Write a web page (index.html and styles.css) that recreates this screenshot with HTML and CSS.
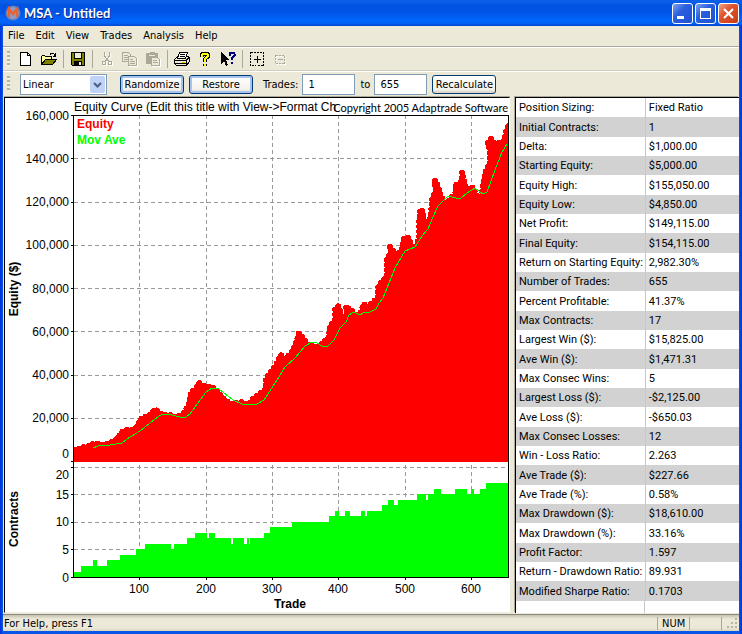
FILE: index.html
```html
<!DOCTYPE html>
<html lang="en">
<head>
    <meta charset="UTF-8">
    <meta name="viewport" content="width=device-width, initial-scale=1.0">
    <title>MSA - Untitled</title>
    <link rel="stylesheet" href="styles.css">
</head>
<body>
    <div class="window">
        <header class="titlebar">
            <svg class="app-icon" width="16" height="16" viewBox="0 0 16 16">
                <circle cx="8" cy="8" r="7.5" fill="#6a7fb8"/>
                <circle cx="8" cy="8" r="6" fill="#8f9cc4"/>
                <path d="M4 12V4l4 5 4-5v8" fill="none" stroke="#f0602c" stroke-width="2.4"/>
            </svg>
            <h1>MSA - Untitled</h1>
            <div class="window-buttons">
                <button type="button" aria-label="Minimize">
                    <svg width="19" height="19" viewBox="0 0 19 19"><path d="M4 12h7v3H4z" fill="#fff"/></svg>
                </button>
                <button type="button" aria-label="Maximize">
                    <svg width="19" height="19" viewBox="0 0 19 19"><path d="M4 4h11v11H4zM5 7v7h9V7z" fill="#fff" fill-rule="evenodd"/></svg>
                </button>
                <button type="button" class="close" aria-label="Close">
                    <svg width="19" height="19" viewBox="0 0 19 19"><path d="M5 5l9 9M14 5l-9 9" stroke="#fff" stroke-width="2.2"/></svg>
                </button>
            </div>
        </header>

        <nav class="menubar">
            <button type="button">File</button>
            <button type="button">Edit</button>
            <button type="button">View</button>
            <button type="button">Trades</button>
            <button type="button">Analysis</button>
            <button type="button">Help</button>
        </nav>

        <div class="toolbar">
            <span class="grip"></span>
            <button type="button" class="tool" aria-label="New">
                <svg width="16" height="16" viewBox="0 0 16 16"><path d="M2.500 1.500h7l3 3v10h-10z" fill="#fff" stroke="#000"/><path d="M9.500 1.500v3h3" fill="none" stroke="#000"/></svg>
            </button>
            <button type="button" class="tool" aria-label="Open">
                <svg width="16" height="16" viewBox="0 0 16 16"><path d="M0.500 13.500v-8l1-1h2l1 1h6v3" fill="#ffff9c" stroke="#000"/><path d="M0.500 13.500l4-5h11l-4 5z" fill="#808000" stroke="#000"/><path d="M9 3.500q2.500-3 5 1M14.500 2v3h-3" fill="none" stroke="#000"/></svg>
            </button>
            <span class="divider"></span>
            <button type="button" class="tool" aria-label="Save">
                <svg width="16" height="16" viewBox="0 0 16 16"><path d="M1.500 1.500h13v13h-12l-1-1z" fill="#808000" stroke="#000"/><path d="M4.500 1.500h7v6h-7z" fill="#ece9d8" stroke="#000"/><path d="M4 10h8v4H4z" fill="#000"/><path d="M9 11h2v3H9z" fill="#ece9d8"/></svg>
            </button>
            <span class="divider"></span>
            <button type="button" class="tool" aria-label="Cut" disabled>
                <svg width="16" height="16" viewBox="0 0 16 16"><g fill="none" stroke="#fff" transform="translate(1 1)"><path d="M5.500 1v4l4 5M10.500 1v4l-4 5"/><circle cx="5" cy="12" r="2"/><circle cx="11" cy="12" r="2"/></g><g fill="none" stroke="#aca899"><path d="M5.500 1v4l4 5M10.500 1v4l-4 5"/><circle cx="5" cy="12" r="2"/><circle cx="11" cy="12" r="2"/></g></svg>
            </button>
            <button type="button" class="tool" aria-label="Copy" disabled>
                <svg width="16" height="16" viewBox="0 0 16 16"><g fill="#ece9d8" stroke="#aca899"><path d="M0.500 1.500h6l2 2v7h-8zM2 4.500h4M2 6.500h5M2 8.500h5"/><path d="M6.500 5.500h6l2 2v7h-8z"/><path d="M8 8.500h3M8 10.500h5M8 12.500h5"/></g><path d="M7 15.500h8.500V8" fill="none" stroke="#fff"/></svg>
            </button>
            <button type="button" class="tool" aria-label="Paste" disabled>
                <svg width="16" height="16" viewBox="0 0 16 16"><path d="M1 2h3l1-1h4l1 1h3v11H1z" fill="#aca899"/><path d="M4 4.500h6" stroke="#ece9d8"/><path d="M6.500 6.500h6l2 2v6h-8z" fill="#ece9d8" stroke="#aca899"/><path d="M8 9.500h4M8 11.500h5" stroke="#aca899"/><path d="M7 15.500h8.500V8" fill="none" stroke="#fff"/></svg>
            </button>
            <span class="divider"></span>
            <button type="button" class="tool" aria-label="Print">
                <svg width="16" height="16" viewBox="0 0 16 16"><path d="M0.500 8.500l3-3h11l1 1v4l-3 4h-10l-2-2z" fill="#ece9d8" stroke="#000"/><path d="M3.500 7.500l2-6h8l-2 6z" fill="#fff" stroke="#000"/><path d="M6 3.500h5M5.500 5.500h5M1 9.500h11l3-3M1 12.500h11M12.500 9.500v4" fill="none" stroke="#000"/><path d="M8 11h3" stroke="#cc0" stroke-width="1"/></svg>
            </button>
            <button type="button" class="tool" aria-label="About">
                <svg width="16" height="16" viewBox="0 0 16 16"><path d="M5 6V4q0-1.500 3-1.500t3 1.500v1.500L8 8v2.500M8 12.500v2" fill="none" stroke="#000" stroke-width="4"/><path d="M5 6V4q0-1.500 3-1.500t3 1.500v1.500L8 8v2.500M8 12.500v2" fill="none" stroke="#ff0" stroke-width="2"/></svg>
            </button>
            <button type="button" class="tool" aria-label="Context help">
                <svg width="16" height="16" viewBox="0 0 16 16"><path d="M1 1v12l3-3 2 5 2-1-2-5h4z" fill="#000"/><path d="M9.500 5V3q0-1.500 2.500-1.500T14.500 3v1.500L12 7v2M12 10.500v2" fill="none" stroke="#000080" stroke-width="2"/></svg>
            </button>
            <span class="divider"></span>
            <button type="button" class="tool" aria-label="Add to selection">
                <svg width="16" height="16" viewBox="0 0 16 16"><path d="M1.500 1.500h13v13h-13z" fill="none" stroke="#000" stroke-dasharray="2 1"/><path d="M5 8.500h7M8.500 5v7" stroke="#000"/></svg>
            </button>
            <button type="button" class="tool" aria-label="Remove from selection" disabled>
                <svg width="16" height="16" viewBox="0 0 16 16"><path d="M4.500 5.500h9v8h-9z" fill="none" stroke="#fff" stroke-dasharray="2 1"/><path d="M3.500 4.500h9v8h-9z" fill="none" stroke="#aca899" stroke-dasharray="2 1"/><path d="M6 8.500h5" stroke="#aca899"/></svg>
            </button>
        </div>

        <form class="toolbar options">
            <span class="grip"></span>
            <div class="combo">
                <select aria-label="Scale">
                    <option>Linear</option>
                    <option>Log</option>
                </select>
                <svg class="combo-arrow" width="15" height="17" viewBox="0 0 15 17"><rect width="15" height="17" rx="2" fill="#c1d2f7"/><path d="M4 7l3.500 3.500L11 7" fill="none" stroke="#4d6185" stroke-width="2.2"/></svg>
            </div>
            <button type="button" class="push default">Randomize</button>
            <button type="button" class="push default">Restore</button>
            <label class="trades" for="from">Trades:</label>
            <input type="text" id="from" value="1">
            <label for="to">to</label>
            <input type="text" id="to" value="655">
            <button type="button" class="push">Recalculate</button>
        </form>

        <main class="panes">
            <section class="chart-pane">
                <svg class="chart" viewBox="5 98 504 514" preserveAspectRatio="xMinYMin meet">
                    <clipPath id="plot"><path d="M74 116H508V462H74z"/></clipPath>

                    <text class="title" x="74" y="111">Equity Curve (Edit this title with View-&gt;Format Ch</text>
                    <text class="copyright" x="508" y="112">Copyright 2005 Adaptrade Software</text>

                    <g class="grid">
                        <path d="M139.500 115V577M206.500 115V577M272.500 115V577M338.500 115V577M405.500 115V577M471.500 115V577"/>
                        <path d="M74 158.500H508M74 202.500H508M74 245.500H508M74 288.500H508M74 331.500H508M74 375.500H508M74 418.500H508M74 467.500H508M74 494.500H508M74 522.500H508M74 549.500H508"/>
                    </g>

                    <!-- equity -->
                    <g clip-path="url(#plot)">
                        <path class="equity" d="M70 466V450L80 449 84 447 90 446 95 443 103 445 112 442 118 438 122 432 127 430 132 430 138 426 139 422 142 418 150 415 155 409 160 413 163 415 170 415 177 417 184 413 188 406 190 399 191 392 194 390 197 387 199 383 204 386 212 387 217 391 223 398 230 404 237 403 242 402 248 405 253 399 257 396 265 390 266 380 269 374 274 368 278 361 281 355 284 359 291 354 295 345 297 340 299 333 303 338 308 345 318 347 324 342 329 337 330 326 335 320 335 310 338 306 340 310 341 316 344 321 347 314 346 306 350 310 354 312 358 318 362 309 364 304 367 308 373 302 378 298 378 288 380 284 387 276 387 265 387 258 391 254 390 247 393 251 396 256 402 249 404 238 408 238 411 243 415 251 419 238 419 226 420 212 421 209 423 213 424 222 427 232 431 214 432 200 436 190 434 181 436 181 438 187 441 196 445 203 449 201 452 197 456 192 456 184 457 188 462 180 462 172 462 172 463 178 466 188 470 190 473 187 475 192 480 203 484 180 486 170 490 163 490 151 488 143 491 139 494 143 499 143 504 141 506 132 509 124V466z"/>
                    </g>
                    <polyline class="average" points="93,448 98,446 110,445 122,443 127,439 140,431 150,423 159,416 163,414 172,415 180,417 186,417 190,414 195,407 206,392 212,388 219,389 233,400 242,404 251,405 257,404 264,400 277,380 285,367 295,358 305,346 312,342 317,343 322,346 328,346 334,340 340,328 346,322 349,315 354,312 360,315 365,312 370,312 376,309 379,303 383,298 395,268 405,251 415,247 422,236 428,229 433,217 438,206 448,196 460,199 467,193 475,188 483,194 487,192 495,170 502,152 507,144"/>

                    <!-- contracts -->
                    <path class="contracts" d="M74 577V572H81V566H93V560H97V566H107V560H120V555H136V549H145V544H171V549H174V544H187V538H195V533H207V538H209V533H215V538H231V544H233V538H244V544H247V538H249V544H250V538H264V533H270V527H292V522H329V516H335V511H339V516H345V511H350V516H361V511H365V516H367V511H382V505H388V500H394V505H398V500H417V494H426V500H428V494H434V489H441V494H455V489H467V494H471V489H474V494H480V489H486V483H508V577z"/>

                    <path class="axis" d="M73.500 578V115.500H508.500V577.500H71M71 115.500h3M71 158.500h3M71 202.500h3M71 245.500h3M71 288.500h3M71 331.500h3M71 375.500h3M71 418.500h3M71 461.500h3M71 467.500h3M71 494.500h3M71 522.500h3M71 549.500h3M139.500 577v3M206.500 577v3M272.500 577v3M338.500 577v3M405.500 577v3M471.500 577v3"/>

                    <g class="y-labels">
                        <text x="69" y="120">160,000</text>
                        <text x="69" y="163">140,000</text>
                        <text x="69" y="206">120,000</text>
                        <text x="69" y="249">100,000</text>
                        <text x="69" y="293">80,000</text>
                        <text x="69" y="336">60,000</text>
                        <text x="69" y="379">40,000</text>
                        <text x="69" y="422">20,000</text>
                        <text x="69" y="458">0</text>
                        <text x="69" y="479">20</text>
                        <text x="69" y="499">15</text>
                        <text x="69" y="526">10</text>
                        <text x="69" y="554">5</text>
                        <text x="69" y="582">0</text>
                    </g>
                    <g class="x-labels">
                        <text x="139" y="593">100</text>
                        <text x="206" y="593">200</text>
                        <text x="272" y="593">300</text>
                        <text x="338" y="593">400</text>
                        <text x="405" y="593">500</text>
                        <text x="471" y="593">600</text>
                    </g>
                    <g class="names">
                        <text x="290" y="608">Trade</text>
                        <text transform="translate(18 289) rotate(-90)">Equity ($)</text>
                        <text transform="translate(18 519) rotate(-90)">Contracts</text>
                    </g>
                    <text class="legend legend-equity" x="77" y="128">Equity</text>
                    <text class="legend legend-average" x="77" y="144">Mov Ave</text>
                </svg>
            </section>

            <section class="stats-pane">
                <table class="stats">
                    <tbody>
                        <tr><th scope="row">Position Sizing:</th><td>Fixed Ratio</td></tr>
                        <tr><th scope="row">Initial Contracts:</th><td>1</td></tr>
                        <tr><th scope="row">Delta:</th><td>$1,000.00</td></tr>
                        <tr><th scope="row">Starting Equity:</th><td>$5,000.00</td></tr>
                        <tr><th scope="row">Equity High:</th><td>$155,050.00</td></tr>
                        <tr><th scope="row">Equity Low:</th><td>$4,850.00</td></tr>
                        <tr><th scope="row">Net Profit:</th><td>$149,115.00</td></tr>
                        <tr><th scope="row">Final Equity:</th><td>$154,115.00</td></tr>
                        <tr><th scope="row">Return on Starting Equity:</th><td>2,982.30%</td></tr>
                        <tr><th scope="row">Number of Trades:</th><td>655</td></tr>
                        <tr><th scope="row">Percent Profitable:</th><td>41.37%</td></tr>
                        <tr><th scope="row">Max Contracts:</th><td>17</td></tr>
                        <tr><th scope="row">Largest Win ($):</th><td>$15,825.00</td></tr>
                        <tr><th scope="row">Ave Win ($):</th><td>$1,471.31</td></tr>
                        <tr><th scope="row">Max Consec Wins:</th><td>5</td></tr>
                        <tr><th scope="row">Largest Loss ($):</th><td>-$2,125.00</td></tr>
                        <tr><th scope="row">Ave Loss ($):</th><td>-$650.03</td></tr>
                        <tr><th scope="row">Max Consec Losses:</th><td>12</td></tr>
                        <tr><th scope="row">Win - Loss Ratio:</th><td>2.263</td></tr>
                        <tr><th scope="row">Ave Trade ($):</th><td>$227.66</td></tr>
                        <tr><th scope="row">Ave Trade (%):</th><td>0.58%</td></tr>
                        <tr><th scope="row">Max Drawdown ($):</th><td>$18,610.00</td></tr>
                        <tr><th scope="row">Max Drawdown (%):</th><td>33.16%</td></tr>
                        <tr><th scope="row">Profit Factor:</th><td>1.597</td></tr>
                        <tr><th scope="row">Return - Drawdown Ratio:</th><td>89.931</td></tr>
                        <tr><th scope="row">Modified Sharpe Ratio:</th><td>0.1703</td></tr>
                    </tbody>
                </table>
                <div class="stats-rest"></div>
            </section>
        </main>

        <footer class="statusbar">
            <span class="hint">For Help, press F1</span>
            <span class="cell">NUM</span>
            <span class="cell"></span>
            <span class="cell corner">
                <svg width="12" height="12" viewBox="0 0 12 12"><path d="M9 1h2v2H9zM5 5h2v2H5zM9 5h2v2H9zM1 9h2v2H1zM5 9h2v2H5zM9 9h2v2H9z" fill="#b8b4a3"/></svg>
            </span>
        </footer>
    </div>
</body>
</html>
```
FILE: styles.css
```css
* {
    box-sizing: border-box;
}
body {
    margin: 0;
    font-family: "DejaVu Sans Condensed", "Liberation Sans", sans-serif;
    font-size: 11px;
    color: #000;
}
button, input, select {
    font: inherit;
    color: inherit;
}
.window {
    display: flex;
    flex-direction: column;
    min-height: 100vh;
    padding: 0 3px 3px;
    background: linear-gradient(90deg, #0031d8, #0855e8 3px, #0855e8 calc(100% - 3px), #0031d8);
}

/* title bar */
.titlebar {
    display: flex;
    align-items: center;
    height: 26px;
    margin: 0 -3px;
    padding: 0 3px 0 5px;
    background: linear-gradient(#0a5ee8 0, #0a5ee8 2px, #0053e1 5px, #0054e5 12px, #0164fb 20px, #0163f8 23px, #0043cf 26px);
}
.titlebar h1 {
    flex: 1;
    margin: 0 0 0 3px;
    font-family: Lato, "Open Sans", sans-serif;
    font-size: 13px;
    line-height: 16px;
    color: #fff;
    text-shadow: 1px 1px #0a1883;
}
.window-buttons {
    display: flex;
    gap: 2px;
}
.window-buttons button {
    width: 21px;
    height: 21px;
    padding: 0;
    border: 1px solid #fff;
    border-radius: 3px;
    background: linear-gradient(135deg, #7ea1f0, #2a5fde 40%, #1f4fd0);
}
.window-buttons .close {
    background: linear-gradient(135deg, #f0a184, #e0532d 40%, #c93c14);
}
.window-buttons svg {
    display: block;
}

/* menu */
.menubar {
    display: flex;
    height: 21px;
    background: #ece9d8;
    border-bottom: 1px solid #aca899;
}
.menubar button {
    padding: 0 6px 2px 5px;
    border: 0;
    background: none;
}

/* toolbars */
.toolbar {
    display: flex;
    align-items: center;
    height: 24px;
    padding-left: 4px;
    padding-bottom: 1px;
    background: #ece9d8;
    border-top: 1px solid #fff;
    border-bottom: 1px solid #d0ccba;
}
.grip {
    width: 3px;
    height: 16px;
    margin-right: 5px;
    background: repeating-linear-gradient(#b8b4a3 0, #b8b4a3 2px, #f8f7f0 2px, #ece9d8 4px);
}
.tool {
    width: 23px;
    height: 21px;
    padding: 0 3px;
    border: 0;
    background: none;
}
.tool svg {
    display: block;
    shape-rendering: crispEdges;
}
.divider {
    width: 1px;
    height: 18px;
    margin: 0 3px 0 2px;
    background: #aca899;
}
.options {
    height: 26px;
    border-bottom: 0;
}
.options .grip {
    margin-right: 10px;
}
.combo {
    display: flex;
    align-items: center;
    margin-right: 13px;
    background: #fff;
    border: 1px solid #7f9db9;
}
.combo select {
    width: 85px;
    height: 19px;
    padding: 0 2px;
    border: 0;
    background: none;
    appearance: none;
}
.combo-arrow {
    margin-left: -16px;
    margin-right: 1px;
    pointer-events: none;
}
.push {
    width: 64px;
    height: 19px;
    padding: 0;
    border: 1px solid #003c74;
    border-radius: 3px;
    background: linear-gradient(#fff, #f2f1ea 80%, #d6d0c5);
}
.push.default {
    margin-right: 5px;
    box-shadow: inset 0 0 0 2px #a9c3f0;
}
.options .trades {
    margin: 0 4px 0 5px;
}
.options input {
    width: 53px;
    height: 21px;
    margin-right: 5px;
    padding: 0 5px;
    border: 1px solid #7f9db9;
    background: #fff;
}
.options label {
    margin-right: 4px;
}

/* chart and statistics */
.panes {
    display: flex;
    flex: 1;
    padding-bottom: 1px;
    background: #ece9d8;
}
.chart-pane {
    flex: 1;
    min-width: 0;
    margin: 0 5px 0 1px;
    border: 1px solid #000;
    border-right-color: #fff;
    border-bottom-color: #f1efe2;
    background: #fff;
    box-shadow: 0 -1px #aca899;
}
.chart {
    display: block;
    width: 100%;
    font-family: "Liberation Sans", Arial, sans-serif;
    font-size: 12px;
    shape-rendering: crispEdges;
}
.copyright {
    font-family: Lato, Arial, sans-serif;
    font-size: 11px;
    text-anchor: end;
}
.grid {
    fill: none;
    stroke: #999;
    stroke-dasharray: 4 3;
}
.equity {
    fill: #f00;
    stroke: #f00;
    stroke-width: 6;
    stroke-linecap: round;
    stroke-dasharray: 0 5;
}
.average {
    fill: none;
    stroke: #0f0;
}
.contracts {
    fill: #0f0;
}
.axis {
    fill: none;
    stroke: #000;
}
.y-labels {
    text-anchor: end;
}
.x-labels, .names {
    text-anchor: middle;
}
.names, .legend {
    font-weight: bold;
}
.legend-equity {
    fill: #f00;
}
.legend-average {
    fill: #0f0;
}
.stats-pane {
    display: flex;
    flex-direction: column;
    flex: 0 0 224px;
    border-top: 1px solid #000;
    border-left: 1px solid #000;
    background: #fff;
    box-shadow: -1px -1px #aca899;
    font-family: Roboto, Arial, sans-serif;
}
.stats {
    width: 100%;
    border-collapse: collapse;
    table-layout: fixed;
}
.stats tr {
    height: 19px;
}
.stats tr:nth-child(3n+2) {
    height: 20px;
}
.stats tr:nth-child(even) {
    background: #d2d2d2;
}
.stats th {
    width: 58%;
    padding: 0 0 0 3px;
    font-weight: normal;
    text-align: left;
    white-space: nowrap;
}
.stats td {
    padding: 0 0 0 3px;
    border-left: 1px solid #c8c8c8;
}
.stats-rest {
    flex: 1;
    width: 58%;
    border-right: 1px solid #c8c8c8;
}

/* status bar */
.statusbar {
    display: flex;
    align-items: center;
    height: 17px;
    padding-left: 1px;
    background: linear-gradient(#c5c2b2, #ece9d8 4px, #ece9d8 13px, #d8d4c2);
    border-top: 1px solid #8c8a80;
}
.hint {
    flex: 1;
}
.cell {
    width: 32px;
    height: 13px;
    padding-left: 4px;
    border-left: 1px solid #aca899;
    line-height: 13px;
}
.corner {
    width: 18px;
}
.corner svg {
    display: block;
}
```
